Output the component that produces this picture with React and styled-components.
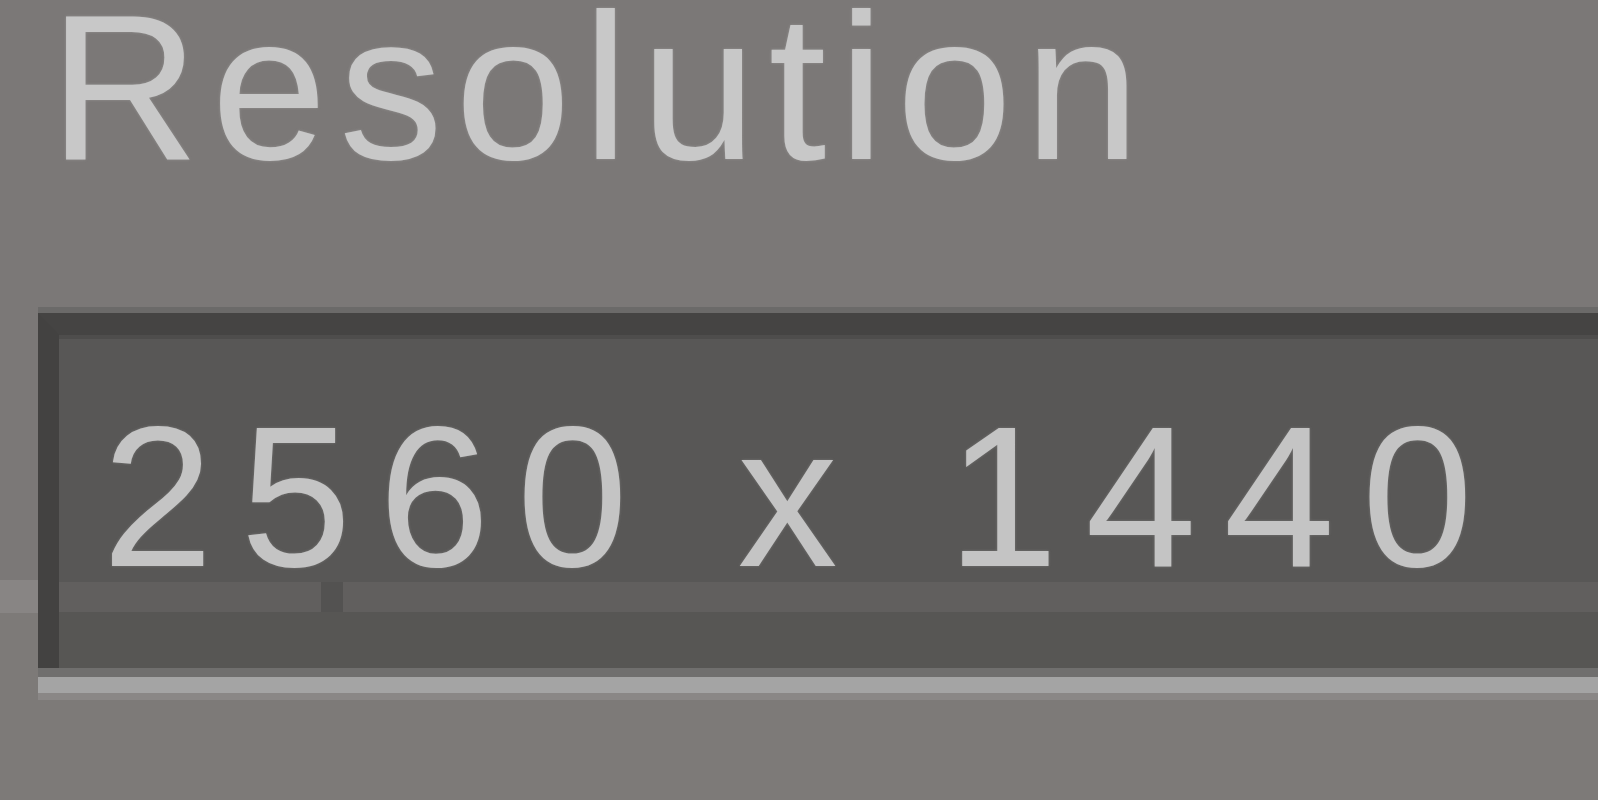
import styled, { createGlobalStyle } from 'styled-components';

const GlobalStyle = createGlobalStyle`
    html, body {
        margin: 0;
        padding: 0;
        background: #7b7877;
    }
    body {
        font-family: "Liberation Sans", Arial, sans-serif;
    }
`;

const Page = styled.div`
    width: 100vw;
    height: 800px;
    overflow: hidden;
    display: flex;
    flex-direction: column;
    padding-left: 38px;
    box-sizing: border-box;
    background: linear-gradient(
        to bottom,
        #7b7877 0 580px,
        #888584 580px 613px,
        #7d7a78 613px
    );
`;

const Label = styled.div`
    padding-left: 11px;
    font-size: 208px;
    line-height: 175px;
    letter-spacing: 12px;
    color: #c8c8c8;
    text-shadow: 0 0 3px rgba(200, 200, 200, 0.35);
    white-space: nowrap;
`;

const Field = styled.div`
    margin-top: 138px;
    margin-right: -200px;
    padding-bottom: 9px;
    background: #706f6e;
    border-bottom: 16px solid #a4a4a4;
    box-shadow: 0 -6px 0 #6b6a69, 0 7px 0 #8a8786;
`;

const Input = styled.div`
    border-top: 22px solid #454443;
    border-left: 21px solid #434241;
    padding: 0 0 10px 43px;
    font-size: 200px;
    line-height: 323px;
    letter-spacing: 27px;
    color: #c4c4c4;
    text-shadow: 0 0 3px rgba(196, 196, 196, 0.3);
    white-space: nowrap;
    background:
        linear-gradient(#535251, #535251) no-repeat 262px 247px / 22px 30px,
        linear-gradient(
            to bottom,
            #4e4d4c 0 4px,
            #585756 4px 247px,
            #615f5e 247px 277px,
            #575654 277px
        );
`;

const App = () => {
  return (
    <>
      <GlobalStyle />
      <Page>
        <Label>Resolution</Label>
        <Field>
          <Input>2560 x 1440</Input>
        </Field>
      </Page>
    </>
  );
};

export default App;
